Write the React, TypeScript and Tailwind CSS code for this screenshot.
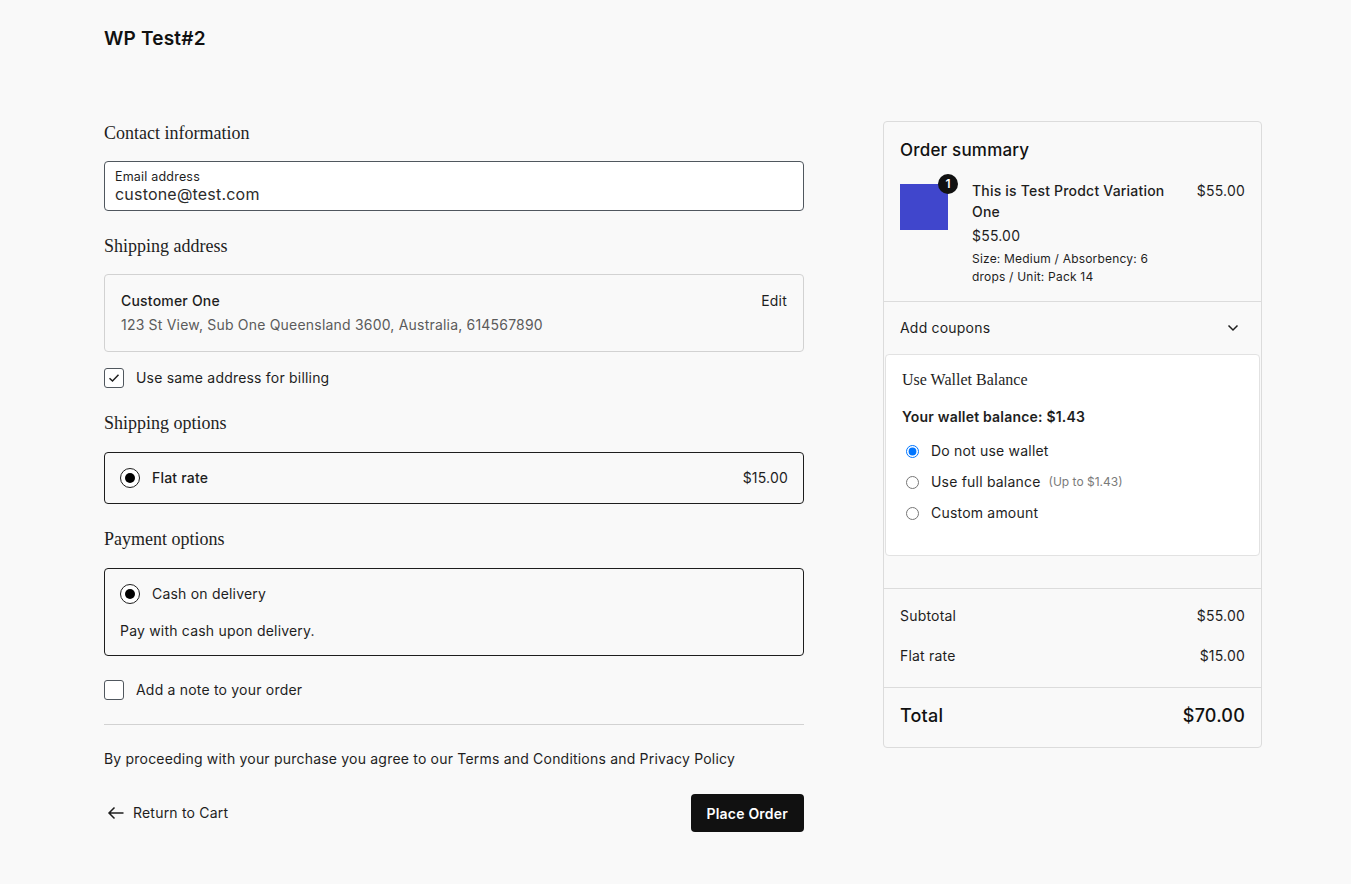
import React from "react";

const sans = { fontFamily: "Inter, 'Liberation Sans', sans-serif" };
const serif = { fontFamily: "'Liberation Serif', 'DejaVu Serif', serif" };

function Radio() {
  return (
    <span className="flex h-[20px] w-[20px] shrink-0 items-center justify-center rounded-full border-[1.5px] border-[#1e1e1e] bg-white">
      <span className="h-[10px] w-[10px] rounded-full bg-[#000]" />
    </span>
  );
}

function Heading({ children }: { children: React.ReactNode }) {
  return (
    <h2 className="text-[18px] leading-[24px] tracking-normal text-[#1e1e1e]" style={serif}>
      {children}
    </h2>
  );
}

export default function App() {
  return (
    <div className="min-h-[884px] w-full bg-[#f9f9f9] tracking-[0.2px] text-[#1e1e1e]" style={sans}>
      <div className="ml-[104px] w-[1158px] pt-[27px]">
        <div className="text-[19px] font-semibold leading-[24px] text-[#111]">WP Test#2</div>
        <div className="mt-[58px] flex justify-between">
          {/* Left column */}
          <div className="w-[700px] pt-[12px]">
            <Heading>Contact information</Heading>
            <div className="mt-[16px] flex h-[50px] flex-col justify-center rounded-[4px] border border-[#50575e] bg-white px-[10px]">
              <div className="text-[12.5px] leading-[15px] text-[#1e1e1e]">Email address</div>
              <div className="text-[16px] leading-[20px] text-[#2c2c2c]">custone@test.com</div>
            </div>

            <div className="mt-[23px]">
              <Heading>Shipping address</Heading>
            </div>
            <div className="mt-[16px] flex h-[78px] items-start justify-between rounded-[4px] border border-[#d2d2d2] px-[16px] pt-[16px]">
              <div>
                <div className="text-[14px] font-medium leading-[20px] text-[#1e1e1e]">Customer One</div>
                <div className="mt-[4px] text-[14px] leading-[20px] text-[#5b5b5b]">
                  123 St View, Sub One Queensland 3600, Australia, 614567890
                </div>
              </div>
              <div className="text-[14px] leading-[20px] text-[#1e1e1e]">Edit</div>
            </div>

            <div className="mt-[16px] flex items-center gap-[12px]">
              <span className="flex h-[20px] w-[20px] items-center justify-center rounded-[3px] border border-[#50575e] bg-white">
                <svg width="12" height="10" viewBox="0 0 12 10" fill="none">
                  <path d="M1.5 5.2 L4.5 8 L10.5 1.8" stroke="#1e1e1e" strokeWidth="1.5" />
                </svg>
              </span>
              <span className="text-[14px] leading-[20px]">Use same address for billing</span>
            </div>

            <div className="mt-[23px]">
              <Heading>Shipping options</Heading>
            </div>
            <div className="mt-[17px] flex h-[52px] items-center justify-between rounded-[4px] border-[1.5px] border-[#1e1e1e] px-[15px]">
              <div className="flex items-center gap-[12px]">
                <Radio />
                <span className="text-[14px] font-medium leading-[20px]">Flat rate</span>
              </div>
              <span className="text-[14px] leading-[20px]">$15.00</span>
            </div>

            <div className="mt-[23px]">
              <Heading>Payment options</Heading>
            </div>
            <div className="mt-[17px] h-[88px] rounded-[4px] border-[1.5px] border-[#1e1e1e] px-[15px] pt-[15px]">
              <div className="flex items-center gap-[12px]">
                <Radio />
                <span className="text-[14px] leading-[20px]">Cash on delivery</span>
              </div>
              <div className="mt-[17px] text-[14px] leading-[20px]">Pay with cash upon delivery.</div>
            </div>

            <div className="mt-[24px] flex items-center gap-[12px]">
              <span className="h-[20px] w-[20px] rounded-[3px] border border-[#50575e] bg-white" />
              <span className="text-[14px] leading-[20px]">Add a note to your order</span>
            </div>

            <div className="mt-[24px] h-px bg-[#d2d2d2]" />

            <div className="mt-[24px] text-[14px] leading-[20px]">
              By proceeding with your purchase you agree to our Terms and Conditions and Privacy Policy
            </div>

            <div className="mt-[25px] flex items-center justify-between">
              <div className="flex items-center gap-[8px] pl-[3px]">
                <svg width="18" height="14" viewBox="0 0 18 14" fill="none">
                  <path d="M16.5 7 H2 M7.5 1.5 L2 7 L7.5 12.5" stroke="#1e1e1e" strokeWidth="1.5" />
                </svg>
                <span className="text-[14px] leading-[20px]">Return to Cart</span>
              </div>
              <button className="h-[38px] rounded-[4px] bg-[#111] px-[16px] text-[14px] font-semibold text-white">
                Place Order
              </button>
            </div>
          </div>

          {/* Right column */}
          <div className="w-[379px] pt-[12px]">
            <div className="rounded-[4px] border border-[#dcdcdc]">
              <div className="px-[16px] pt-[17px] pb-[15px]">
                <div className="text-[17px] font-medium leading-[22px] text-[#111]">Order summary</div>
                <div className="mt-[19px] flex">
                  <div className="relative mt-[4px] h-[46px] w-[48px] shrink-0 bg-[#4046cc]">
                    <span className="absolute -right-[10px] -top-[10px] flex h-[20px] w-[20px] items-center justify-center rounded-full bg-[#111] text-[12px] font-semibold tracking-normal text-white">
                      1
                    </span>
                  </div>
                  <div className="ml-[24px] w-[200px]">
                    <div className="text-[14px] font-medium leading-[21px]">This is Test Prodct Variation One</div>
                    <div className="mt-[3px] text-[14px] leading-[21px]">$55.00</div>
                    <div className="mt-[4px] text-[12px] leading-[18px]">Size: Medium / Absorbency: 6 drops / Unit: Pack 14</div>
                  </div>
                  <div className="ml-auto text-[14px] leading-[21px]">$55.00</div>
                </div>
              </div>
              <div className="h-px bg-[#dcdcdc]" />
              <div className="flex h-[52px] items-center justify-between px-[16px]">
                <span className="text-[14px] leading-[20px]">Add coupons</span>
                <svg width="12" height="8" viewBox="0 0 12 8" fill="none" className="mr-[6px]">
                  <path d="M1.5 1.5 L6 6 L10.5 1.5" stroke="#1e1e1e" strokeWidth="1.5" />
                </svg>
              </div>
              <div className="mx-[1px] h-[202px] rounded-[4px] border border-[#e2e2e2] bg-white px-[16px] pt-[14px]">
                <div className="text-[16px] leading-[22px] tracking-normal text-[#1e1e1e]" style={serif}>Use Wallet Balance</div>
                <div className="mt-[16px] text-[14px] font-semibold leading-[20px]">Your wallet balance: $1.43</div>
                <div className="mt-[14px] flex flex-col gap-[11px] pl-[4px]">
                  <label className="flex items-center gap-[12px]">
                    <input type="radio" name="w" defaultChecked className="m-0 h-[13px] w-[13px]" />
                    <span className="text-[14px] leading-[20px]">Do not use wallet</span>
                  </label>
                  <label className="flex items-center gap-[12px]">
                    <input type="radio" name="w" className="m-0 h-[13px] w-[13px]" />
                    <span className="text-[14px] leading-[20px]">Use full balance</span>
                    <span className="-ml-[4px] text-[12px] leading-[20px] tracking-normal text-[#7a7a7a]">(Up to $1.43)</span>
                  </label>
                  <label className="flex items-center gap-[12px]">
                    <input type="radio" name="w" className="m-0 h-[13px] w-[13px]" />
                    <span className="text-[14px] leading-[20px]">Custom amount</span>
                  </label>
                </div>
              </div>
              <div className="h-[32px]" />
              <div className="h-px bg-[#dcdcdc]" />
              <div className="px-[16px] pt-[17px] pb-[21px]">
                <div className="flex items-center justify-between text-[14px] leading-[20px]">
                  <span>Subtotal</span>
                  <span>$55.00</span>
                </div>
                <div className="mt-[20px] flex items-center justify-between text-[14px] leading-[20px]">
                  <span>Flat rate</span>
                  <span>$15.00</span>
                </div>
              </div>
              <div className="h-px bg-[#dcdcdc]" />
              <div className="flex h-[59px] items-center justify-between px-[16px] pb-[3px]">
                <span className="text-[18px] font-medium leading-[24px] text-[#111]">Total</span>
                <span className="text-[18px] font-medium leading-[24px] text-[#111]">$70.00</span>
              </div>
            </div>
          </div>
        </div>
      </div>
    </div>
  );
}
